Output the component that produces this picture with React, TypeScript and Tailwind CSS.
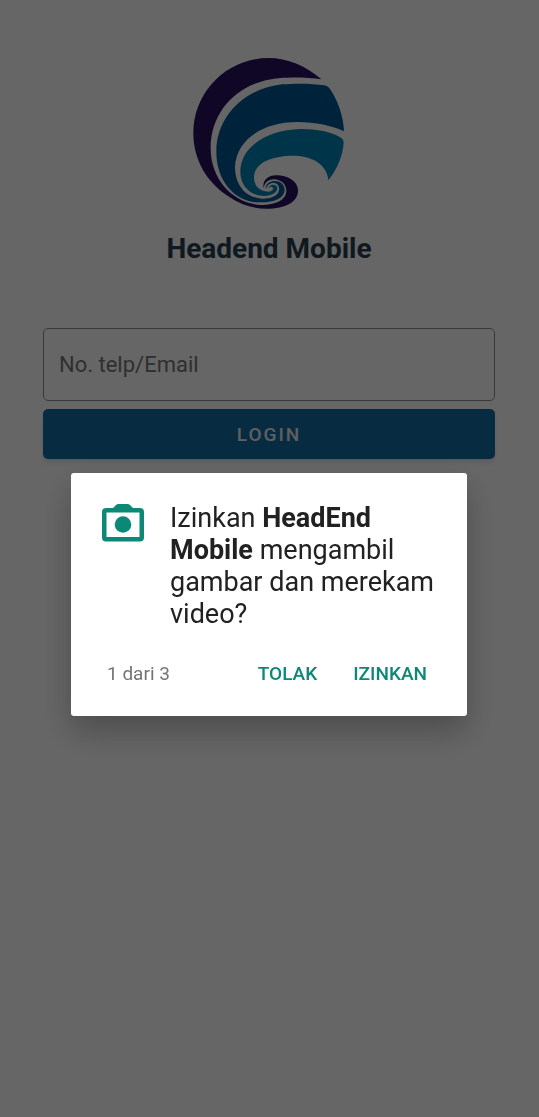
import { useState } from "react";

function Logo() {
  return (
    <svg viewBox="0 0 540 540" className="size-[180px]" role="img" aria-label="Headend Mobile logo">
      <path
        fill="#28105f"
        d="M427 103C380 62 325 39 269 39C144 39 43 140 43 265C43 345 85 415 150 455C185 479 225 491 262 491C320 491 357 470 357 437C357 408 325 391 290 391C266 391 249 408 254 429C257 411 270 403 285 403C306 403 322 418 322 438C321 465 290 480 245 480C163 476 95 405 95 310C95 185 195 98 325 98C365 97 400 99 427 103Z"
      />
      <path
        fill="#005797"
        d="M435 121C400 115 350 115 310 118C195 130 112 215 112 320C112 410 170 472 242 472C290 472 317 457 317 434C316 417 302 407 286 408C270 409 259 418 260 432C265 419 273 413 284 413C299 415 305 430 297 444C288 457 268 462 248 461C205 458 168 425 168 365C172 285 250 231 355 231C410 231 460 242 495 259C494 215 475 163 453 132C447 124 441 122 435 121Z"
      />
      <path
        fill="#0083b3"
        d="M486 278C455 260 415 252 365 252C265 254 184 305 184 380C184 425 218 453 256 453C282 453 299 439 294 425C288 415 270 417 266 433C271 424 279 423 282 429C284 438 271 443 258 439C238 435 225 420 225 397C225 355 275 332 345 332C400 332 445 360 448 406C475 372 492 330 494 293C494 286 491 281 486 278Z"
      />
    </svg>
  );
}

function CameraIcon() {
  return (
    <svg viewBox="0 0 42 38" className="h-[38px] w-[42px] shrink-0 fill-[#0b8876]" aria-hidden="true">
      <path
        fillRule="evenodd"
        d="M4 4H11L14 1Q15 0 16.500 0H25.500Q27 0 28 1L31 4H38Q42 4 42 8V33.500Q42 37.500 38 37.500H4Q0 37.500 0 33.500V8Q0 4 4 4ZM4.500 8.500V33H37.500V8.500Z"
      />
      <circle cx="21" cy="20.500" r="8.300" />
    </svg>
  );
}

export default function App() {
  const [open, setOpen] = useState(true);

  return (
    <div className="min-h-screen bg-white font-['Roboto','Liberation_Sans',sans-serif]">
      <main className="flex flex-col items-center pt-[45px] pr-11 pl-[43px]">
        <Logo />
        <h1 className="mt-[5px] text-[28px] leading-[38px] font-bold text-[#28404f]">Headend Mobile</h1>
        <form className="mt-[60px] flex w-full flex-col gap-2" onSubmit={(e) => e.preventDefault()}>
          <input
            type="text"
            aria-label="No. telp/Email"
            placeholder="No. telp/Email"
            className="h-[73px] w-full rounded-[5px] border border-[#909090] bg-white px-[15px] text-[22px] text-[#333333] placeholder:text-[#777777]"
          />
          <button
            type="submit"
            className="h-[50px] w-full rounded-[5px] bg-[#126ca3] pt-[2px] text-[19px] font-medium tracking-[2px] text-[#eeeeee] shadow-md"
          >
            LOGIN
          </button>
        </form>
      </main>

      {open && (
        <div className="fixed inset-0 flex items-center justify-center bg-black/60 pt-[72px] pr-[72px] pl-[71px]">
          <section
            role="dialog"
            aria-modal="true"
            aria-labelledby="permission-title"
            className="w-full max-w-[480px] rounded-[3px] bg-white shadow-[0_16px_32px_rgba(0,0,0,0.25)]"
          >
            <div className="flex gap-[26px] pt-[29px] pr-6 pl-[31px]">
              <div className="pt-[2px]">
                <CameraIcon />
              </div>
              <h2 id="permission-title" className="text-[27px] leading-[32px] text-[#212121]">
                Izinkan <b>HeadEnd Mobile</b> mengambil gambar dan merekam video?
              </h2>
            </div>
            <div className="flex items-center pt-5 pr-7 pb-[18px] pl-9">
              <p className="grow text-[19px] text-[#757575]">1 dari 3</p>
              <div className="flex gap-3 text-[19px] font-medium text-[#0b8876]">
                <button type="button" className="h-12 px-3" onClick={() => setOpen(false)}>
                  TOLAK
                </button>
                <button type="button" className="h-12 px-3" onClick={() => setOpen(false)}>
                  IZINKAN
                </button>
              </div>
            </div>
          </section>
        </div>
      )}
    </div>
  );
}
